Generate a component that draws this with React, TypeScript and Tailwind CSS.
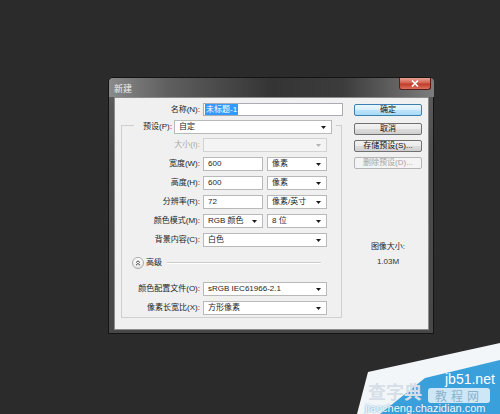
import React from 'react'

const font = "font-['Liberation_Sans','Noto_Sans_CJK_SC',sans-serif]"

function Arrow({ disabled }: { disabled?: boolean }) {
  return (
    <svg width="5" height="3" viewBox="0 0 5 3" className="shrink-0">
      <path d="M0 0h5L2.5 3z" fill={disabled ? '#b4b4b4' : '#1a1a1a'} />
    </svg>
  )
}

function Select({ value, w, disabled }: { value?: string; w: string; disabled?: boolean }) {
  return (
    <div className={`flex h-[14px] items-center justify-between border pl-[4px] pr-[5px] ${w} ${disabled ? 'border-[#d3d3d3] bg-[#f4f4f4]' : 'border-[#b9b9b9] bg-white'}`}>
      <span className="leading-[12px]">{value}</span>
      <Arrow disabled={disabled} />
    </div>
  )
}

function Input({ value }: { value: string }) {
  return (
    <div className="flex h-[14px] w-[60px] items-center border border-[#b9b9b9] bg-white pl-[4px]">
      <span className="leading-[12px]">{value}</span>
    </div>
  )
}

function Row({ label, disabled, children }: { label: string; disabled?: boolean; children: React.ReactNode }) {
  return (
    <div className="flex h-[14px] items-center gap-[3px]">
      <div className={`w-[78px] text-right leading-[12px] ${disabled ? 'text-[#a8a8a8]' : 'text-[#1e1e1e]'}`}>{label}</div>
      {children}
    </div>
  )
}

function Button({ children, primary, disabled, mt }: { children: React.ReactNode; primary?: boolean; disabled?: boolean; mt: string }) {
  const look = primary
    ? 'border-[#3c7fb1] bg-[linear-gradient(#eaf6fd,#d9f0fc_45%,#bee6fd_50%,#a7d9f5)] text-[#111]'
    : disabled
      ? 'border-[#b5b5b5] bg-[#f4f4f4] text-[#a3a3a3]'
      : 'border-[#707070] bg-[linear-gradient(#f2f2f2,#ebebeb_45%,#dddddd_50%,#cfcfcf)] text-[#111]'
  return (
    <div className={`flex h-[12px] items-center justify-center rounded-[2px] border leading-[10px] ${look} ${mt}`}>{children}</div>
  )
}

export default function App() {
  return (
    <div className={`relative h-[414px] w-[500px] overflow-hidden bg-[#2b2b2b] pl-[108px] pt-[77px] text-[8px] ${font}`}>
      <div className="flex h-[257px] w-[326px] flex-col rounded-t-[5px] border border-[#141414] bg-[linear-gradient(#5e5e5e,#4d4d4d_30%,#474747)] pb-[3px] pl-[5px] pr-[4px]">
        {/* title bar */}
        <div className="-mx-[5px] flex h-[19px] items-start rounded-t-[4px] bg-[linear-gradient(90deg,#8a8a8a_0%,#5f5f5f_18%,#343434_50%,#3c3c3c_72%,#7d7d7d_100%)] pl-[5px] pr-[3px]">
          <span className="mt-[6px] text-[9px] leading-[10px] text-[#f2f2f2]">新建</span>
          <div className="ml-auto flex h-[12px] w-[32px] items-center justify-center rounded-b-[3px] border border-t-0 border-[#5a1c1c] bg-[linear-gradient(#e8a093,#d2614f_45%,#c13a28_55%,#d9735f)]">
            <svg width="8" height="7" viewBox="0 0 8 7">
              <path d="M1 0.5l6 6M7 0.5l-6 6" stroke="#fff" strokeWidth="1.6" />
            </svg>
          </div>
        </div>

        {/* client area */}
        <div className="flex flex-1 border border-[#8c8c8c] bg-[#f0f0f0] text-[#1e1e1e]">
          <div className="flex w-[239px] flex-col pt-[5px]">
            <div className="flex h-[13px] items-center gap-[3px]">
              <div className="w-[85px] text-right leading-[12px]">名称(N):</div>
              <div className="flex h-[13px] w-[140px] items-center border border-[#abadb3] bg-white pl-[1px]">
                <span className="bg-[#3399ff] px-[1px] leading-[11px] text-white">未标题-1</span>
              </div>
            </div>

            <div className="ml-[6px] mt-[9px] flex w-[221px] flex-col border border-[#cfcfcf] pb-[2px]">
              <div className="-mt-[6px] ml-[12px] flex w-fit items-center gap-[2px] bg-[#f0f0f0] pl-[9px] pr-[4px]">
                <span className="leading-[12px]">预设(P):</span>
                <Select value="自定" w="w-[158px]" />
              </div>

              <div className="mt-[4px] flex flex-col gap-[5px]">
                <Row label="大小(I):" disabled>
                  <Select w="w-[124px]" disabled />
                </Row>
                <Row label="宽度(W):">
                  <div className="flex gap-[4px]">
                    <Input value="600" />
                    <Select value="像素" w="w-[60px]" />
                  </div>
                </Row>
                <Row label="高度(H):">
                  <div className="flex gap-[4px]">
                    <Input value="600" />
                    <Select value="像素" w="w-[60px]" />
                  </div>
                </Row>
                <Row label="分辨率(R):">
                  <div className="flex gap-[4px]">
                    <Input value="72" />
                    <Select value="像素/英寸" w="w-[60px]" />
                  </div>
                </Row>
                <Row label="颜色模式(M):">
                  <div className="flex gap-[4px]">
                    <Select value="RGB 颜色" w="w-[60px]" />
                    <Select value="8 位" w="w-[60px]" />
                  </div>
                </Row>
                <Row label="背景内容(C):">
                  <Select value="白色" w="w-[124px]" />
                </Row>
              </div>

              <div className="ml-[10px] mr-[20px] mt-[10px] flex h-[12px] items-center">
                <div className="flex h-[12px] w-[12px] items-center justify-center rounded-full border border-[#a9a9a9] bg-[linear-gradient(#ffffff,#e6e6e6)]">
                  <svg width="6" height="6" viewBox="0 0 6 6">
                    <path d="M1 2.6L3 0.8 5 2.6M1 5.2L3 3.4 5 5.2" stroke="#333" strokeWidth="0.9" fill="none" />
                  </svg>
                </div>
                <span className="ml-[2px] leading-[12px]">高级</span>
                <div className="ml-[5px] flex-1 border-b border-t border-b-white border-t-[#cdcdcd]" />
              </div>

              <div className="mt-[13px] flex flex-col gap-[5px]">
                <Row label="颜色配置文件(O):">
                  <Select value="sRGB IEC61966-2.1" w="w-[124px]" />
                </Row>
                <Row label="像素长宽比(X):">
                  <Select value="方形像素" w="w-[124px]" />
                </Row>
              </div>
            </div>
          </div>

          <div className="flex w-[68px] flex-col pt-[6px]">
            <Button primary mt="">确定</Button>
            <Button mt="mt-[7px]">取消</Button>
            <Button mt="mt-[5px]">存储预设(S)...</Button>
            <Button disabled mt="mt-[5px]">删除预设(D)...</Button>
            <div className="mt-[73px] text-center leading-[10px]">图像大小:</div>
            <div className="mt-[5px] text-center leading-[10px] text-[#333]">1.03M</div>
          </div>
        </div>
      </div>

      {/* watermark */}
      <div className="absolute left-[350px] top-[335px] h-[79px] w-[150px] overflow-hidden">
        <svg className="absolute inset-0" width="150" height="79" viewBox="0 0 150 79">
          <polygon points="7,79 18,37 150,8 150,79" fill="#f3f6f9" />
          <polygon points="75,43 150,25 150,79 30,79" fill="#3aa0dc" />
        </svg>
        <div className="absolute left-[18px] top-[46px] text-[18px] font-bold leading-[21px] text-[#d6dee7] font-['Noto_Sans_CJK_SC',sans-serif]">查字典</div>
        <div className="absolute left-[95px] top-[37px] text-[14px] leading-[15px] text-white font-['Liberation_Sans',sans-serif]">jb51.net</div>
        <div className="absolute left-[78px] top-[53px] flex h-[15px] w-[62px] items-center justify-center rounded-[3px] bg-white/75 text-[12px] leading-[14px] tracking-[4px] text-[#8db2cc] font-['Noto_Sans_CJK_SC',sans-serif]">教程网</div>
        <div className="absolute left-[15px] top-[68px] text-[11px] leading-[11px] text-[#f2f8fc] font-['Liberation_Sans',sans-serif] [text-shadow:0_0_2px_#3a8fc4]">jiaocheng.chazidian.com</div>
      </div>
    </div>
  )
}
